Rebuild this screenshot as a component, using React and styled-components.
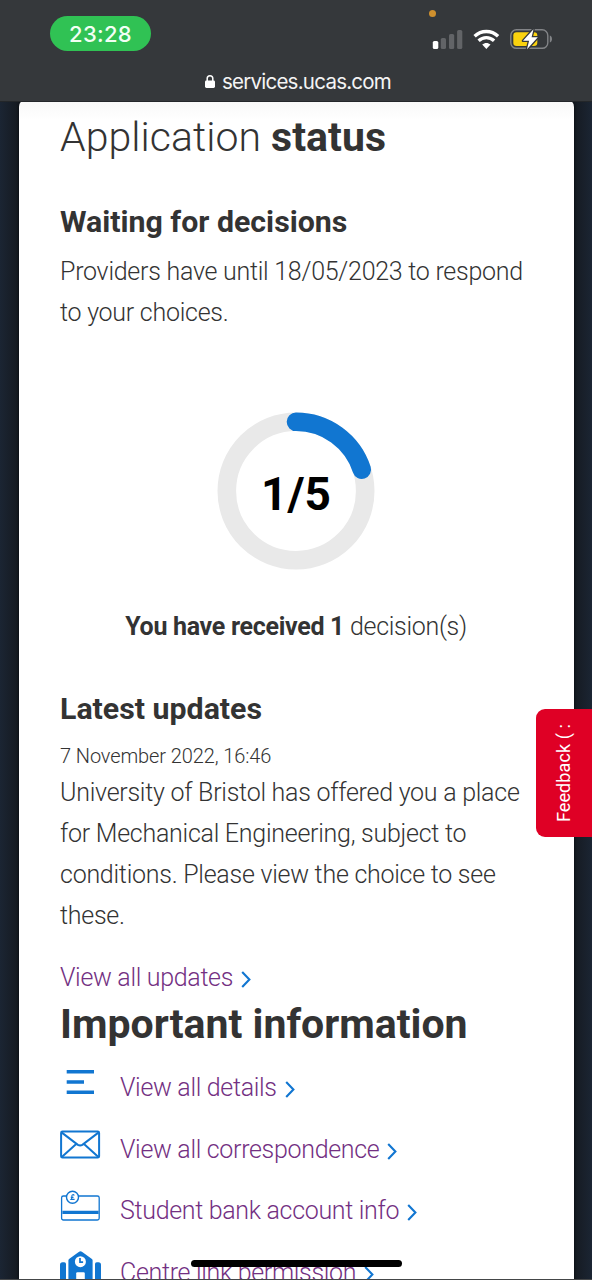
import React from "react";
import styled, { createGlobalStyle, css } from "styled-components";

const GlobalStyle = createGlobalStyle`
  *, *::before, *::after { box-sizing: border-box; }
  html, body { margin: 0; padding: 0; }
  body { font-family: Roboto, sans-serif; color: #333; overflow: hidden; }
  h1, h2, h3, p { margin: 0; }
`;

const blue = "#1176d1";

const Screen = styled.div`
  position: relative;
  width: 592px;
  height: 1280px;
  overflow: hidden;
  display: flex;
  flex-direction: column;
  background: linear-gradient(90deg, #1b2533 0, #151a21 18px, #151a21 574px, #1b2533 592px);
`;

const BrowserChrome = styled.header`
  position: relative;
  z-index: 1;
  flex: none;
  height: 102px;
  background: #35383b;
  border-bottom: 1px solid #232629;
  display: flex;
  flex-direction: column;
`;

const StatusBar = styled.div`
  height: 64px;
  padding: 16px 40px 0 50px;
  display: flex;
  justify-content: space-between;
  align-items: flex-start;
`;

const Clock = styled.div`
  width: 101px;
  height: 35px;
  border-radius: 18px;
  background: #30c254;
  color: #f2fff4;
  font: 500 22px/37px Inter, sans-serif;
  letter-spacing: 0.3px;
  text-align: center;
`;

const StatusIcons = styled.div`
  position: relative;
  display: flex;
  align-items: center;
  height: 46px;
`;

const RecordingDot = styled.span`
  position: absolute;
  left: -3px;
  top: -6px;
  width: 7px;
  height: 7px;
  border-radius: 50%;
  background: #cf902e;
`;

const AddressBar = styled.div`
  height: 36px;
  display: flex;
  justify-content: center;
  align-items: center;
  gap: 7px;
  padding-left: 4px;
  color: #f4f4f4;
  font: 400 20.5px/36px Inter, sans-serif;
  letter-spacing: -0.75px;
`;

const Card = styled.main`
  flex: 1;
  min-height: 0;
  width: 555px;
  margin: -3px 0 0 19px;
  padding: 13px 42px 0 41px;
  overflow: hidden;
  border-radius: 8px 8px 0 0;
  background: linear-gradient(#f7f7f7 0, #fff 21px);
  box-shadow: 0 0 3px #05080c;
`;

const PageTitle = styled.h1`
  font-size: 41px;
  font-weight: 300;
  line-height: 50px;
  letter-spacing: 0.04px;
  white-space: nowrap;
  b { font-weight: 700; }
`;

const ImportantTitle = styled.h2`
  font-size: 41px;
  font-weight: 700;
  line-height: 50px;
  white-space: nowrap;
`;

const SectionTitle = styled.h3`
  font-size: 30.3px;
  font-weight: 700;
  line-height: 40px;
  white-space: nowrap;
`;

const bodyText = css`
  font-size: 25px;
  font-weight: 300;
  line-height: 41px;
  letter-spacing: -0.26px;
  white-space: nowrap;
`;

const Paragraph = styled.p`
  ${bodyText}
`;

const TextLine = styled.span`
  display: block;
`;

const StatusSection = styled.section`
  padding-top: 40px;
  ${Paragraph} { margin-top: 9px; }
`;

const Progress = styled.div`
  margin: 79px auto 0;
  width: 158px;
  height: 158px;
  display: grid;
  place-items: center;
  > * { grid-area: 1 / 1; }
`;

const ProgressValue = styled.strong`
  color: #000;
  font-size: 46px;
  line-height: 54px;
  padding-top: 6px;
`;

const Received = styled.p`
  ${bodyText}
  letter-spacing: -0.3px;
  margin-top: 36px;
  text-align: center;
  b { font-weight: 700; }
`;

const UpdatesSection = styled.section`
  padding-top: 42px;
`;

const UpdateDate = styled.p`
  margin-top: 14px;
  font-size: 20px;
  font-weight: 300;
  line-height: 26px;
  height: 29px;
  letter-spacing: -0.1px;
  white-space: nowrap;
`;

const Link = styled.a`
  ${bodyText}
  letter-spacing: -0.32px;
  display: inline-flex;
  align-items: center;
  gap: 8px;
  color: #733082;
  svg { position: relative; top: 2px; }
`;

const UpdatesLink = styled.div`
  display: flex;
  padding-top: 19px;
  height: 63px;
`;

const LinkList = styled.div`
  padding-top: 18px;
`;

const LinkRow = styled.div`
  display: grid;
  grid-template-columns: 60px auto;
  height: 61.7px;
  align-items: start;
  > svg { overflow: visible; }
`;

const FeedbackTab = styled.aside`
  position: absolute;
  top: 709px;
  right: 0;
  width: 56px;
  height: 128px;
  border-radius: 9px 0 0 9px;
  background: #df0025;
  color: #fff;
  display: flex;
  align-items: center;
  justify-content: center;
  span {
    writing-mode: vertical-rl;
    transform: rotate(180deg);
    font: 400 18px/22px Roboto, sans-serif;
    letter-spacing: 0.1px;
    white-space: nowrap;
  }
`;

const HomeIndicator = styled.div`
  position: absolute;
  left: 191px;
  top: 1260px;
  width: 211px;
  height: 7px;
  border-radius: 4px;
  background: #000;
`;

const BottomEdge = styled.div`
  position: absolute;
  left: 0;
  right: 0;
  bottom: 0;
  height: 1px;
  background: #444648;
`;

const SystemIcons = () => (
  <svg width="120" height="30" viewBox="0 0 120 30">
    <rect x="0.8" y="17" width="5.5" height="8" rx="1.6" fill="#fff" />
    <g fill="#626467">
      <rect x="8.8" y="14" width="5.2" height="11" rx="1.6" />
      <rect x="17" y="10" width="5.2" height="15" rx="1.6" />
      <rect x="25.1" y="6" width="5.2" height="19" rx="1.6" />
    </g>
    <g fill="none" stroke="#fff" strokeWidth="3.4">
      <path d="M42.6 12.2c6.7-6.3 16.8-6.3 23.5 0" />
      <path d="M46.6 16.7c4.5-4.1 11-4.1 15.5 0" />
    </g>
    <path d="M50.2 20.5c2.5-2.1 5.8-2.1 8.3 0l-4.15 4.5z" fill="#fff" />
    <rect x="78.8" y="5.8" width="37" height="18.5" rx="5.6" fill="none" stroke="#828487" strokeWidth="1.4" />
    <path d="M117.8 11.5c2.9.8 2.9 6.2 0 7z" fill="#828487" />
    <rect x="81.3" y="8.2" width="24" height="13.8" rx="3.3" fill="#fad20e" />
    <path d="M101.5 5.2 91 16.8h6.1l-2.1 8.5 10.8-12h-6.2z" fill="#fff" stroke="#35383b" strokeWidth="2.6" paintOrder="stroke" strokeLinejoin="round" />
  </svg>
);

const LockIcon = () => (
  <svg width="10" height="14" viewBox="0 0 10 14">
    <rect y="5.4" width="10" height="7.6" rx="1.4" fill="#fff" />
    <path d="M2.2 6V3.6a2.8 2.8 0 0 1 5.6 0V6" fill="none" stroke="#fff" strokeWidth="1.5" />
  </svg>
);

const Chevron = () => (
  <svg width="10" height="17" viewBox="0 0 10 17">
    <path d="M1.2 1 8.4 8.5 1.2 16" fill="none" stroke={blue} strokeWidth="2.1" />
  </svg>
);

const DetailsIcon = () => (
  <svg width="40" height="40" viewBox="0 0 40 40">
    <path d="M6.7 4.7H34M6.7 15H24M6.7 25.2H34" stroke={blue} strokeWidth="3.4" />
  </svg>
);

const EnvelopeIcon = () => (
  <svg width="40" height="40" viewBox="0 0 40 40" fill="none" stroke={blue} strokeWidth="2">
    <rect x="1.1" y="2.6" width="38" height="26" rx="1.4" />
    <path d="m1.5 3.4 16.4 12.5q2.2 1.3 4.4 0L38.7 3.4M1.8 28l14.4-13M38.4 28 24 15" />
  </svg>
);

const CardIcon = () => (
  <svg width="40" height="40" viewBox="0 0 40 40" fill="none" stroke={blue}>
    <rect x="1.6" y="6" width="37.6" height="24" rx="1.8" strokeWidth="1.3" />
    <path d="M2.4 22.4h36.2" strokeWidth="3.2" />
    <circle cx="12.5" cy="7.2" r="6" fill="#fff" strokeWidth="1.4" />
    <path d="M14.3 5.5c-.8-1.4-2.7-.9-2.4.6.3 1.2.3 2.2-.8 3.3h3.5M10.8 7.4h2.7" strokeWidth="1.1" />
  </svg>
);

const SchoolIcon = () => (
  <svg width="41" height="40" viewBox="0 0 41 40">
    <g transform="translate(0 -.7)">
      <path d="M0 13.5q0-2.5 2.5-2.5h1.8q1.7 0 1.7 1.7V40H0zM35 12.7q0-1.7 1.7-1.7h1.8q2.5 0 2.5 2.5V40h-6zM8.4 40V9q0-1 1-1.6l9.7-7q1.4-1 2.8 0l9.7 7q1 .7 1 1.6v31z" fill={blue} />
      <circle cx="20.4" cy="10.4" r="5.5" fill="#fff" />
      <path d="M20 6.8v4.1h3.1" fill="none" stroke={blue} strokeWidth="1.7" />
      <path d="M16.2 40V22.2q0-1.2 1.2-1.2h6.2q1.2 0 1.2 1.2V40z" fill="#fff" />
    </g>
  </svg>
);

const ProgressRing = () => (
  <svg width="158" height="158" viewBox="0 0 158 158" fill="none" strokeWidth="18.6">
    <circle cx="79" cy="79" r="69.2" stroke="#e9e9e9" />
    <path d="M79 9.8A69.2 69.2 0 0 1 144.8 57.6" stroke={blue} strokeLinecap="round" />
  </svg>
);

const links = [
  { label: "View all details", Icon: DetailsIcon },
  { label: "View all correspondence", Icon: EnvelopeIcon },
  { label: "Student bank account info", Icon: CardIcon },
  { label: "Centre link permission", Icon: SchoolIcon },
];

export default function App() {
  return (
    <Screen>
      <GlobalStyle />
      <BrowserChrome>
        <StatusBar>
          <Clock>23:28</Clock>
          <StatusIcons>
            <RecordingDot />
            <SystemIcons />
          </StatusIcons>
        </StatusBar>
        <AddressBar>
          <LockIcon />
          <span>services.ucas.com</span>
        </AddressBar>
      </BrowserChrome>
      <Card>
        <PageTitle>Application <b>status</b></PageTitle>
        <StatusSection>
          <SectionTitle>Waiting for decisions</SectionTitle>
          <Paragraph>
            <TextLine>Providers have until 18/05/2023 to respond</TextLine>
            <TextLine>to your choices.</TextLine>
          </Paragraph>
          <Progress>
            <ProgressRing />
            <ProgressValue>1/5</ProgressValue>
          </Progress>
          <Received><b>You have received 1</b> decision(s)</Received>
        </StatusSection>
        <UpdatesSection>
          <SectionTitle>Latest updates</SectionTitle>
          <UpdateDate>7 November 2022, 16:46</UpdateDate>
          <Paragraph>
            <TextLine>University of Bristol has offered you a place</TextLine>
            <TextLine>for Mechanical Engineering, subject to</TextLine>
            <TextLine>conditions. Please view the choice to see</TextLine>
            <TextLine>these.</TextLine>
          </Paragraph>
          <UpdatesLink>
            <Link>View all updates<Chevron /></Link>
          </UpdatesLink>
        </UpdatesSection>
        <ImportantTitle>Important information</ImportantTitle>
        <LinkList>
          {links.map(({ label, Icon }) => (
            <LinkRow key={label}>
              <Icon />
              <Link>{label}<Chevron /></Link>
            </LinkRow>
          ))}
        </LinkList>
      </Card>
      <FeedbackTab><span>Feedback ( :</span></FeedbackTab>
      <HomeIndicator />
      <BottomEdge />
    </Screen>
  );
}
